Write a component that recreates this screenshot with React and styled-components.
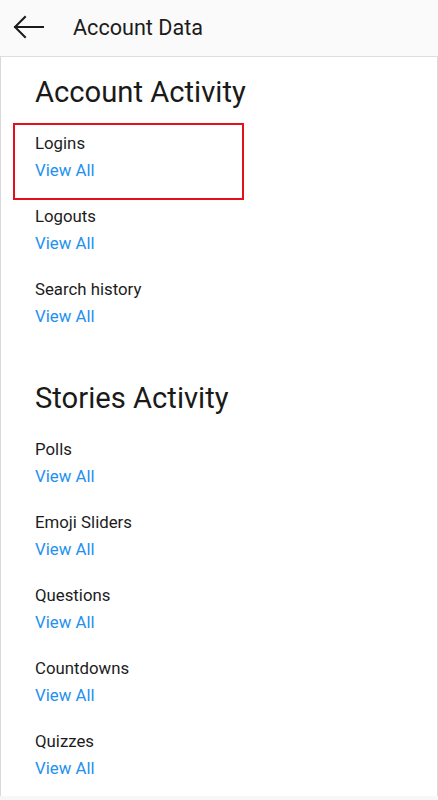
import styled, { createGlobalStyle } from "styled-components";

const GlobalStyle = createGlobalStyle`
  body {
    margin: 0;
    background: #f7f7f7;
    font-family: Roboto, "Noto Sans", "Liberation Sans", sans-serif;
    color: #212121;
  }
`;

const Page = styled.div`
  width: 438px;
  display: flex;
  flex-direction: column;
`;

const Header = styled.header`
  height: 56px;
  display: flex;
  align-items: center;
  background: #fafafa;
  border-bottom: 1px solid #dedede;
`;

const BackButton = styled.button`
  border: none;
  background: none;
  padding: 0;
  margin: 0 0 2px 13px;
  width: 32px;
  height: 24px;
  display: flex;
  align-items: center;
  cursor: pointer;
`;

const Title = styled.h1`
  margin: 0 0 2px 28px;
  font-size: 21.6px;
  font-weight: 400;
  color: #1c1c1c;
`;

const Panel = styled.main`
  background: #fff;
  border-left: 1px solid #d9d9d9;
  border-right: 1px solid #d9d9d9;
  padding-top: 17px;
  display: flex;
  flex-direction: column;
  gap: 36px;
`;

const Section = styled.section`
  display: flex;
  flex-direction: column;
`;

const SectionTitle = styled.h2`
  margin: 0 0 15px 34px;
  font-size: 29.2px;
  line-height: 36px;
  font-weight: 400;
  color: #1a1a1a;
`;

const Item = styled.div`
  height: 73px;
  box-sizing: border-box;
  width: 227px;
  margin-left: 14px;
  padding: 8px 0 0 20px;
  outline: ${(p) => (p.$active ? "2px solid #e3101c" : "none")};
`;

const ItemName = styled.div`
  font-size: 16.8px;
  line-height: 20px;
  color: #1c1c1c;
`;

const ViewAll = styled.a`
  display: block;
  margin-top: 7px;
  font-size: 16.8px;
  line-height: 20px;
  color: #2391f0;
  text-decoration: none;
  cursor: pointer;
`;

const sections = [
  {
    title: "Account Activity",
    items: ["Logins", "Logouts", "Search history"],
  },
  {
    title: "Stories Activity",
    items: ["Polls", "Emoji Sliders", "Questions", "Countdowns", "Quizzes"],
  },
];

const BackArrow = () => (
  <svg width="32" height="24" viewBox="0 0 32 24" fill="none">
    <path
      d="M30 12H2M12 2L2 12l10 10"
      stroke="#1a1a1a"
      strokeWidth="2"
      strokeLinecap="square"
    />
  </svg>
);

const App = () => {
  return (
    <>
      <GlobalStyle />
      <Page>
        <Header>
          <BackButton aria-label="Back">
            <BackArrow />
          </BackButton>
          <Title>Account Data</Title>
        </Header>
        <Panel>
          {sections.map((s) => (
            <Section key={s.title}>
              <SectionTitle>{s.title}</SectionTitle>
              {s.items.map((name) => (
                <Item key={name} $active={name === "Logins"}>
                  <ItemName>{name}</ItemName>
                  <ViewAll>View All</ViewAll>
                </Item>
              ))}
            </Section>
          ))}
        </Panel>
      </Page>
    </>
  );
};

export default App;
